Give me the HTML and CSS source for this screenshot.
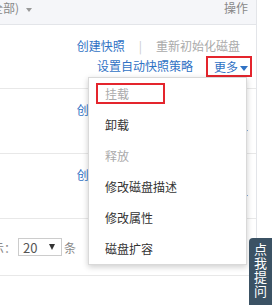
FILE: index.html
```
<!DOCTYPE html>
<html lang="zh-CN">
<head>
    <meta charset="UTF-8">
    <title>磁盘列表</title>
    <link rel="stylesheet" href="styles.css">
</head>
<body>
<div class="table">
    <div class="thead">
        <span class="filter">(全部) <i class="caret-gray"></i></span>
        <span class="th-op">操作</span>
    </div>

    <div class="row">
        <div class="ops">
            <div class="line1">
                <a class="link">创建快照</a>
                <span class="sep">|</span>
                <span class="off">重新初始化磁盘</span>
            </div>
            <div class="line2">
                <a class="link">设置自动快照策略</a>
                <a class="link more mark">更多<i class="caret"></i></a>
            </div>
        </div>
    </div>
    <div class="row">
        <div class="ops">
            <div class="line1">
                <a class="link">创建快照</a>
                <span class="sep">|</span>
                <span class="off">重新初始化磁盘</span>
            </div>
            <div class="line2">
                <a class="link">设置自动快照策略</a>
                <a class="link more">更多<i class="caret"></i></a>
            </div>
        </div>
    </div>
    <div class="row">
        <div class="ops">
            <div class="line1">
                <a class="link">创建快照</a>
                <span class="sep">|</span>
                <span class="off">重新初始化磁盘</span>
            </div>
            <div class="line2">
                <a class="link">设置自动快照策略</a>
                <a class="link more">更多<i class="caret"></i></a>
            </div>
        </div>
    </div>

    <div class="pager">
        <span class="show">显示：</span>
        <span class="select">20 <i class="caret-dark"></i></span>
        <span class="unit">条</span>
        <span class="pg-btn"></span>
    </div>

    <ul class="menu">
        <li class="disabled"><span class="mark-box"></span>挂载</li>
        <li>卸载</li>
        <li class="disabled">释放</li>
        <li>修改磁盘描述</li>
        <li>修改属性</li>
        <li>磁盘扩容</li>
    </ul>
</div>

<div class="side-tab">点我提问</div>
</body>
</html>
```
FILE: styles.css
```
body { margin: 0; width: 272px; height: 305px; overflow: hidden; background: #fff;
       font-family: "Noto Sans CJK SC", "Noto Sans", sans-serif; font-size: 12px; color: #333; }
.table { position: relative; width: 256px; border-right: 1px solid #e3e5e9; }
.thead { height: 24px; background: #f5f6f9; border-bottom: 1px solid #e3e5e9;
         display: flex; justify-content: space-between; line-height: 16px; color: #888; }
.filter { margin-left: -13px; }
.th-op { padding-right: 8px; }
.caret-gray { display: inline-block; margin-left: 4px; vertical-align: middle;
              border-left: 3.5px solid transparent; border-right: 3.5px solid transparent; border-top: 4px solid #999; }

.row { height: 64px; border-bottom: 1px solid #e8e8e8; box-sizing: border-box; padding-top: 11px; }
.row + .row { height: 65px; }
.ops { line-height: 20px; }
.line1 { display: flex; justify-content: flex-end; gap: 14px; padding-right: 16px; }
.line2 { display: flex; justify-content: flex-end; align-items: center; gap: 13px; padding-right: 4px; height: 20px; }
.link { color: #3072c4; cursor: pointer; }
.sep { color: #ccc; }
.off { color: #aaa; }
.more { padding: 0 2px 0 6px; line-height: 17px; border: 2px solid transparent; }
.mark { border-color: #e4252d; }
.caret { display: inline-block; margin-left: 2px; vertical-align: middle;
         border-left: 4px solid transparent; border-right: 4px solid transparent; border-top: 5px solid #3072c4; }

.pager { height: 56px; border-bottom: 1px solid #e8e8e8; display: flex; align-items: center; color: #888; }
.show { margin-left: -20px; }
.select { margin-left: 2px; width: 44px; height: 18px; box-sizing: border-box; border: 1px solid #ccc;
          display: flex; align-items: center; justify-content: space-between; padding: 0 6px 0 4px;
          font-size: 13px; color: #555; }
.caret-dark { display: inline-block; border-left: 3.5px solid transparent; border-right: 3.5px solid transparent;
              border-top: 6px solid #333; }
.unit { margin-left: 2px; }
.pg-btn { margin-left: 77px; width: 33px; height: 30px; margin-top: 2px; box-sizing: border-box;
          border-bottom: 2px solid #1f9fb6; }

.menu { position: absolute; left: 88px; top: 77px; width: 157px; margin: 0; padding: 0; list-style: none;
        background: #fff; border: 1px solid #d9d9d9; box-shadow: 0 2px 6px rgba(0, 0, 0, 0.2); }
.menu li { position: relative; height: 31px; line-height: 31px; padding-left: 16px; color: #333; }
.menu li.disabled { color: #aaa; }
.mark-box { position: absolute; left: 7px; top: 5px; width: 69px; height: 21px; box-sizing: border-box;
            border: 2px solid #e4252d; }

.side-tab { position: fixed; right: 0; top: 238px; width: 23px; height: 80px; background: #3b5264;
            border-radius: 4px 0 0 0; color: #fff; writing-mode: vertical-rl; font-size: 13px;
            line-height: 23px; padding-top: 5px; letter-spacing: 1px; box-sizing: border-box; }
```
